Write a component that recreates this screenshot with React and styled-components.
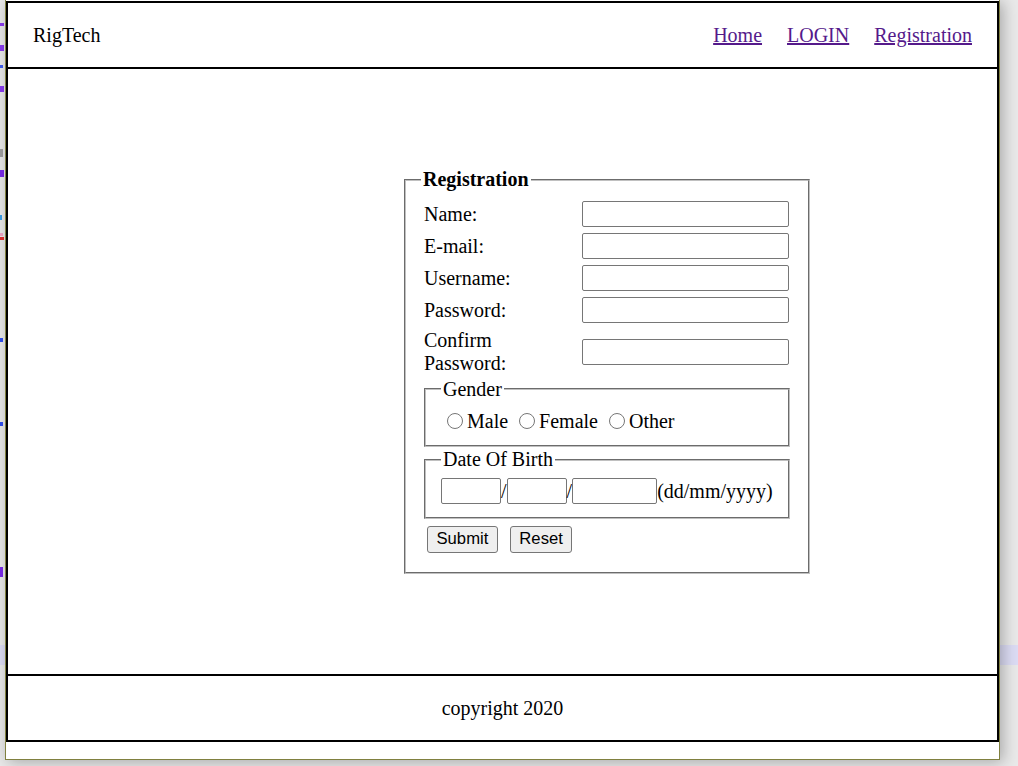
import React from "react";
import styled, { createGlobalStyle } from "styled-components";

const GlobalStyle = createGlobalStyle`
  html, body {
    margin: 0;
    padding: 0;
  }
  body {
    background: #e9e9e9;
    font-family: "Liberation Serif", "Times New Roman", serif;
    overflow: hidden;
  }
`;

const Desktop = styled.div`
  display: flex;
  width: 1018px;
  height: 766px;
  overflow: hidden;
  background: #e9e9e9;
`;

const EditorEdge = styled.div`
  width: 5px;
  flex-shrink: 0;
  display: flex;
  flex-direction: column;
`;

const CodeMark = styled.span`
  display: block;
  flex-shrink: 0;
  margin-top: ${(p) => p.$gap}px;
  width: ${(p) => p.$w}px;
  height: ${(p) => p.$h}px;
  background: ${(p) => p.$color};
`;

const HighlightBand = styled.div`
  flex-shrink: 0;
  margin-top: ${(p) => p.$gap}px;
  height: 20px;
  background: #dcdcf4;
`;

const ShadowEdge = styled.div`
  flex: 1;
  display: flex;
  flex-direction: column;
`;

const Window = styled.div`
  flex-shrink: 0;
  width: 993px;
  height: 759px;
  background: #fff;
  border: 1px solid #80803f;
  border-top: none;
  box-shadow: 3px 2px 14px rgba(0, 0, 0, 0.28);
  display: flex;
  flex-direction: column;
  position: relative;
  z-index: 1;
`;

const Page = styled.div`
  margin-top: 1px;
  border: 2px solid #000;
  border-bottom: none;
  display: flex;
  flex-direction: column;
  font-size: 20px;
  color: #000;
`;

const Header = styled.header`
  height: 64px;
  padding: 0 25px;
  display: flex;
  align-items: center;
  justify-content: space-between;
  border-bottom: 2px solid #000;
`;

const Brand = styled.div`
  line-height: 23px;
`;

const Nav = styled.nav`
  display: flex;
  gap: 25px;
`;

const NavLink = styled.a`
  color: #551a8b;
  text-decoration: underline;
  line-height: 23px;
`;

const Main = styled.main`
  box-sizing: border-box;
  height: 605px;
  padding: 99px 0 0 396px;
`;

const Panel = styled.fieldset`
  box-sizing: border-box;
  width: 406px;
  margin: 0;
  padding: 7px 15px 12.5px;
  border: 2px groove rgb(192, 192, 192);
`;

const PanelTitle = styled.legend`
  padding: 0 2px;
  font-weight: bold;
  line-height: 23px;
`;

const FieldGrid = styled.div`
  display: grid;
  grid-template-columns: 158px 207px;
  row-gap: 6px;
  align-items: center;
  padding: 3px 0 0 3px;
`;

const FieldLabel = styled.label`
  line-height: 23px;
`;

const TextBox = styled.input`
  box-sizing: border-box;
  width: ${(p) => p.$w || 207}px;
  height: 26px;
  margin: 0;
  padding: 1px 2px;
  border: 1px solid #767676;
  border-radius: 2px;
  background: #fff;
  font-size: 16px;
`;

const SubPanel = styled.fieldset`
  box-sizing: border-box;
  width: 366px;
  margin: ${(p) => p.$gap}px 0 0 3px;
  padding: 7px 15px 12.5px;
  border: 2px groove rgb(192, 192, 192);
`;

const SubTitle = styled.legend`
  padding: 0 2px;
  line-height: 23px;
`;

const RadioRow = styled.div`
  display: flex;
  align-items: center;
  height: 23px;
  padding-top: 2px;
`;

const RadioOption = styled.label`
  display: inline-flex;
  align-items: center;
  margin-right: 5px;
  line-height: 23px;
`;

const Radio = styled.input`
  width: 16px;
  height: 16px;
  margin: 0 4px 0 6px;
`;

const DateRow = styled.div`
  display: flex;
  align-items: center;
  height: 26px;
`;

const Slash = styled.span`
  line-height: 23px;
`;

const ButtonRow = styled.div`
  display: flex;
  gap: 12px;
  padding: 7px 0 6px 6px;
`;

const Button = styled.button`
  box-sizing: border-box;
  height: 27.5px;
  padding: 0 ${(p) => p.$pad}px;
  font-family: "Liberation Sans", Arial, sans-serif;
  font-size: 16.67px;
  color: #000;
  background: #efefef;
  border: 1px solid #767676;
  border-radius: 3px;
`;

const Footer = styled.footer`
  height: 64px;
  display: flex;
  align-items: center;
  justify-content: center;
  border-top: 2px solid #000;
  border-bottom: 2px solid #000;
`;

const codeMarks = [
  { top: 23, h: 3, w: 4, color: "#8a3cf0" },
  { top: 45, h: 6, w: 4, color: "#8a3cf0" },
  { top: 65, h: 3, w: 3, color: "#3f5ff0" },
  { top: 86, h: 6, w: 4, color: "#8a3cf0" },
  { top: 149, h: 8, w: 3, color: "#a0a0a0" },
  { top: 170, h: 7, w: 4, color: "#7a2bea" },
  { top: 215, h: 5, w: 2, color: "#3aa0e8" },
  { top: 233, h: 3, w: 3, color: "#f0a8c8" },
  { top: 237, h: 3, w: 4, color: "#e03030" },
  { top: 338, h: 4, w: 3, color: "#3050f0" },
  { top: 422, h: 4, w: 3, color: "#3050f0" },
  { top: 567, h: 10, w: 3, color: "#7a2bea" },
];

function EditorBehind() {
  let y = 0;
  const marks = codeMarks.map((m, i) => {
    const gap = m.top - y;
    y = m.top + m.h;
    return <CodeMark key={i} $gap={gap} $h={m.h} $w={m.w} $color={m.color} />;
  });
  return (
    <EditorEdge>
      {marks}
      <HighlightBand $gap={645 - y} />
    </EditorEdge>
  );
}

export default function App() {
  return (
    <>
      <GlobalStyle />
      <Desktop>
        <EditorBehind />
        <Window>
          <Page>
            <Header>
              <Brand>RigTech</Brand>
              <Nav>
                <NavLink href="#">Home</NavLink>
                <NavLink href="#">LOGIN</NavLink>
                <NavLink href="#">Registration</NavLink>
              </Nav>
            </Header>
            <Main>
              <form onSubmit={(e) => e.preventDefault()}>
                <Panel>
                  <PanelTitle>Registration</PanelTitle>
                  <FieldGrid>
                    <FieldLabel>Name:</FieldLabel>
                    <TextBox type="text" />
                    <FieldLabel>E-mail:</FieldLabel>
                    <TextBox type="text" />
                    <FieldLabel>Username:</FieldLabel>
                    <TextBox type="text" />
                    <FieldLabel>Password:</FieldLabel>
                    <TextBox type="password" />
                    <FieldLabel>
                      Confirm
                      <br />
                      Password:
                    </FieldLabel>
                    <TextBox type="password" />
                  </FieldGrid>
                  <SubPanel $gap={2.5}>
                    <SubTitle>Gender</SubTitle>
                    <RadioRow>
                      <RadioOption>
                        <Radio type="radio" name="gender" />
                        Male
                      </RadioOption>
                      <RadioOption>
                        <Radio type="radio" name="gender" />
                        Female
                      </RadioOption>
                      <RadioOption>
                        <Radio type="radio" name="gender" />
                        Other
                      </RadioOption>
                    </RadioRow>
                  </SubPanel>
                  <SubPanel $gap={1}>
                    <SubTitle>Date Of Birth</SubTitle>
                    <DateRow>
                      <TextBox type="text" $w={60} />
                      <Slash>/</Slash>
                      <TextBox type="text" $w={60} />
                      <Slash>/</Slash>
                      <TextBox type="text" $w={85} />
                      <Slash>(dd/mm/yyyy)</Slash>
                    </DateRow>
                  </SubPanel>
                  <ButtonRow>
                    <Button type="submit" $pad={8.5}>
                      Submit
                    </Button>
                    <Button type="reset" $pad={8.5}>
                      Reset
                    </Button>
                  </ButtonRow>
                </Panel>
              </form>
            </Main>
            <Footer>copyright 2020</Footer>
          </Page>
        </Window>
        <ShadowEdge>
          <HighlightBand $gap={645} />
        </ShadowEdge>
      </Desktop>
    </>
  );
}
